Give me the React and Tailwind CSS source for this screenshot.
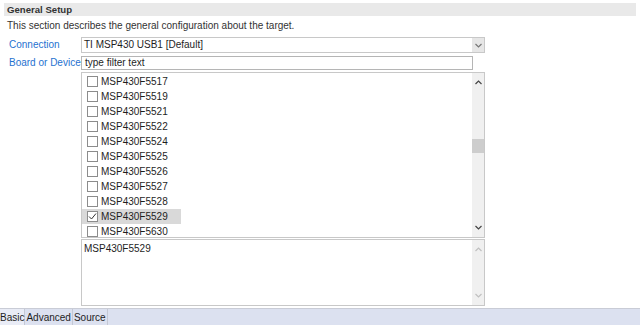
import React from 'react';

const devices = [
    'MSP430F5517',
    'MSP430F5519',
    'MSP430F5521',
    'MSP430F5522',
    'MSP430F5524',
    'MSP430F5525',
    'MSP430F5526',
    'MSP430F5527',
    'MSP430F5528',
    'MSP430F5529',
    'MSP430F5630',
];

const Chevron = ({ up, className }) => (
    <svg width="7" height="5" viewBox="0 0 7 5" className={className}>
        <path d={up ? 'M0.5 4 L3.5 1 L6.5 4' : 'M0.5 1 L3.5 4 L6.5 1'} fill="none" stroke="currentColor" strokeWidth="1.2" />
    </svg>
);

const Scrollbar = ({ thumb, disabled }) => (
    <div className="w-[12px] bg-[#f0f0f0] flex flex-col items-center justify-between py-[7px] relative">
        <Chevron up className={disabled ? 'text-[#c0c0c0]' : 'text-[#444]'} />
        {thumb && <div className="absolute left-0 right-0 top-[66px] h-[14px] bg-[#cdcdcd]"></div>}
        <Chevron className={disabled ? 'text-[#c0c0c0]' : 'text-[#444]'} />
    </div>
);

const DeviceRow = ({ name, checked }) => (
    <div className="h-[15px] flex items-center pl-[5px]">
        <div className={`flex items-center h-[15px] pr-[4px] ${checked ? 'bg-[#d9d9d9] -ml-[5px] pl-[5px] w-[99px]' : ''}`}>
            <div className="w-[11px] h-[11px] border border-[#8c8c8c] bg-white flex items-center justify-center">
                {checked && (
                    <svg width="9" height="9" viewBox="0 0 9 9">
                        <path d="M1 4.5 L3.5 7 L8 1.5" fill="none" stroke="#333" strokeWidth="1" />
                    </svg>
                )}
            </div>
            <span className="ml-[3px]">{name}</span>
        </div>
    </div>
);

const App = () => {
    return (
        <div
            className="w-[640px] h-[325px] bg-white text-[#1e1e1e] text-[10px] leading-[15px] overflow-hidden flex flex-col"
            style={{ fontFamily: '"Liberation Sans", Arial, sans-serif' }}
        >
            {/* top rule */}
            <div className="mt-[1px] h-[1px] bg-[#e3e3e3]"></div>

            {/* section header */}
            <div className="mt-[2px] mx-[4px] h-[13px] bg-[#e9e9e9] font-bold text-[9.6px] leading-[13px] pl-[3px] text-[#333]">
                General Setup
            </div>
            <div className="pl-[7px] mt-[2px] h-[16px] leading-[16px] text-[#333]">
                This section describes the general configuration about the target.
            </div>

            {/* Connection */}
            <div className="flex mt-[3px] h-[16px]">
                <div className="w-[81px] pl-[9px] text-[#1f72d0] leading-[16px]">Connection</div>
                <div className="w-[404px] border border-[#c8c8c8] flex">
                    <div className="flex-1 pl-[2px] leading-[14px]">TI MSP430 USB1 [Default]</div>
                    <div className="w-[12px] bg-[#e6e6e6] flex items-center justify-center">
                        <Chevron className="text-[#777]" />
                    </div>
                </div>
            </div>

            {/* Board or Device */}
            <div className="flex mt-[3px] h-[14px]">
                <div className="w-[81px] pl-[9px] text-[#1f72d0] leading-[14px] whitespace-nowrap">Board or Device</div>
                <div className="w-[392px] border border-[#b5b5b5] pl-[3px] leading-[12px]">type filter text</div>
            </div>

            {/* device list */}
            <div className="flex mt-[2px]">
                <div className="w-[81px]"></div>
                <div className="w-[404px] h-[166px] border border-[#c8c8c8] flex overflow-hidden">
                    <div className="flex-1 pt-[1px] overflow-hidden">
                        {devices.map((d) => (
                            <DeviceRow key={d} name={d} checked={d === 'MSP430F5529'} />
                        ))}
                    </div>
                    <Scrollbar thumb />
                </div>
            </div>

            {/* details */}
            <div className="flex mt-[1px]">
                <div className="w-[81px]"></div>
                <div className="w-[404px] h-[67px] border border-[#c8c8c8] flex">
                    <div className="flex-1 pl-[2px] pt-[1px]">MSP430F5529</div>
                    <Scrollbar disabled />
                </div>
            </div>

            {/* tabs */}
            <div className="mt-[2px] flex-1 bg-[#dce1f0] border-t border-[#c9ccd6] flex">
                <div className="bg-[#e9ecf6] border-r border-[#c4c8d4] leading-[17px]">Basic</div>
                <div className="px-[1px] border-r border-[#c4c8d4] leading-[17px]">Advanced</div>
                <div className="px-[1px] border-r border-[#c4c8d4] leading-[17px]">Source</div>
            </div>
        </div>
    );
};

export default App;
